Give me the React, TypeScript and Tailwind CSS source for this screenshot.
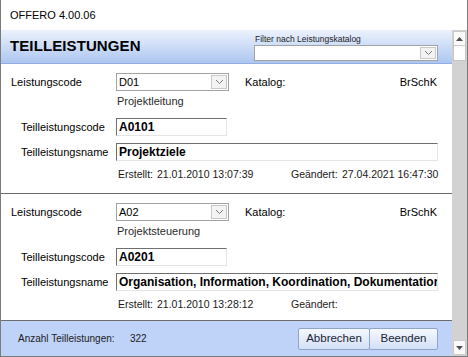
import React from 'react';

interface RecordProps {
  code: string;
  codeName: string;
  catalog: string;
  partCode: string;
  partName: string;
  created: string;
  changed: string;
}

const Chevron: React.FC = () => (
  <svg width="9" height="6" viewBox="0 0 9 6" className="block">
    <polyline points="1,1 4.5,4.5 8,1" fill="none" stroke="#7a7a7a" strokeWidth="1" />
  </svg>
);

const Combo: React.FC<{ value?: string; className?: string }> = ({ value, className }) => (
  <div className={`flex items-stretch bg-white border border-[#a3a3a3] ${className ?? ''}`}>
    <div className="flex-1 pl-[2px] flex items-center text-[11px] leading-none text-black">{value}</div>
    <div className="w-[16px] m-[1px] flex items-center justify-center bg-[#f3f3f3] border border-[#c9c9c9]">
      <Chevron />
    </div>
  </div>
);

const sunken = 'border border-t-[#6f6f6f] border-l-[#6f6f6f] border-r-[#e4e4e4] border-b-[#e4e4e4] bg-white';

const Record: React.FC<RecordProps> = ({ code, codeName, catalog, partCode, partName, created, changed }) => (
  <div className="h-[130px] shrink-0 border-b border-[#6a6a6a] pt-[9px] text-[11px] text-black">
    <div className="flex items-center h-[18px] pr-[15px]">
      <div className="w-[115px] pl-[10px]">Leistungscode</div>
      <Combo value={code} className="w-[113px] h-[18px]" />
      <div className="ml-[16px]">Katalog:</div>
      <div className="ml-auto">{catalog}</div>
    </div>
    <div className="flex items-center h-[21px] pl-[116px] text-[#2a2a2a]">{codeName}</div>
    <div className="flex items-center h-[18px] mt-[6px]">
      <div className="w-[115px] pl-[20px]">Teilleistungscode</div>
      <div className={`w-[111px] h-[18px] flex items-center pl-[2px] text-[12px] font-bold ${sunken}`}>{partCode}</div>
    </div>
    <div className="flex items-center h-[18px] mt-[7px] pr-[14px]">
      <div className="w-[115px] shrink-0 pl-[20px]">Teilleistungsname</div>
      <div className={`flex-1 h-[18px] flex items-center pl-[2px] text-[12px] font-bold whitespace-nowrap overflow-hidden ${sunken}`}>
        {partName}
      </div>
    </div>
    <div className="flex items-center h-[18px] mt-[5px] text-[10.5px] text-[#1a1a1a]">
      <div className="pl-[117px] w-[156px]">Erstellt:</div>
      <div className="w-[134px]">{created}</div>
      <div className="w-[51px]">Geändert:</div>
      <div>{changed}</div>
    </div>
  </div>
);

const records: RecordProps[] = [
  {
    code: 'D01',
    codeName: 'Projektleitung',
    catalog: 'BrSchK',
    partCode: 'A0101',
    partName: 'Projektziele',
    created: '21.01.2010 13:07:39',
    changed: '27.04.2021 16:47:30',
  },
  {
    code: 'A02',
    codeName: 'Projektsteuerung',
    catalog: 'BrSchK',
    partCode: 'A0201',
    partName: 'Organisation, Information, Koordination, Dokumentation',
    created: '21.01.2010 13:28:12',
    changed: '',
  },
];

const App: React.FC = () => {
  return (
    <div className="w-[468px] h-[357px] bg-white border-x border-b border-[#7b7b7b] flex flex-col overflow-hidden font-['Liberation_Sans',Arial,sans-serif]">
      <div className="h-[30px] shrink-0 flex items-center pl-[9px] text-[11px] text-black">OFFERO 4.00.06</div>

      <div className="flex flex-1 min-h-0">
        <div className="flex-1 flex flex-col min-w-0">
          <div className="h-[34px] shrink-0 flex justify-between border-b border-[#90aee2] bg-gradient-to-b from-[#ecf2fd] to-[#adc6f0]">
            <div className="pl-[9px] pt-[5px] text-[15px] font-bold text-black tracking-[0.1px]">TEILLEISTUNGEN</div>
            <div className="w-[184px] mr-[14px] pt-[3px] flex flex-col">
              <div className="h-[12px] leading-[12px] text-[8.5px] pl-[1px] text-[#222]">Filter nach Leistungskatalog</div>
              <Combo className="h-[16px]" />
            </div>
          </div>

          <div className="flex-1 min-h-0 overflow-hidden flex flex-col bg-white">
            {records.map((r) => (
              <Record key={r.partCode} {...r} />
            ))}
          </div>

          <div className="h-[36px] shrink-0 border-t border-[#6c6c6c] bg-[#bfd2f8] flex items-center text-[10px] text-[#1c1c1c] pr-[14px]">
            <div className="pl-[17px] w-[129px]">Anzahl Teilleistungen:</div>
            <div>322</div>
            <div className="ml-auto flex">
              <button className="w-[72px] h-[22px] border border-[#8ea6cc] rounded-[2px] bg-gradient-to-b from-[#f5f8fe] to-[#d2e0f7] text-[11.5px] text-[#1a2436]">
                Abbrechen
              </button>
              <button className="w-[69px] h-[22px] -ml-px border border-[#8ea6cc] rounded-[2px] bg-gradient-to-b from-[#f5f8fe] to-[#d2e0f7] text-[11.5px] text-[#1a2436]">
                Beenden
              </button>
            </div>
          </div>
        </div>

        <div className="w-[15px] shrink-0 bg-[#d2d2d2] flex flex-col justify-between py-[1px]">
          <div className="flex flex-col">
            <div className="h-[15px] mx-[1px] bg-[#fafafa] border border-[#cacaca] flex items-center justify-center">
              <svg width="7" height="4" viewBox="0 0 7 4"><polygon points="0,4 7,4 3.5,0" fill="#505050" /></svg>
            </div>
            <div className="h-[15px] mx-[1px] bg-white border border-[#c4c4c4] border-t-0" />
          </div>
          <div className="h-[15px] mx-[1px] bg-[#fafafa] border border-[#cacaca] flex items-center justify-center">
            <svg width="7" height="4" viewBox="0 0 7 4"><polygon points="0,0 7,0 3.5,4" fill="#505050" /></svg>
          </div>
        </div>
      </div>
    </div>
  );
};

export default App;
